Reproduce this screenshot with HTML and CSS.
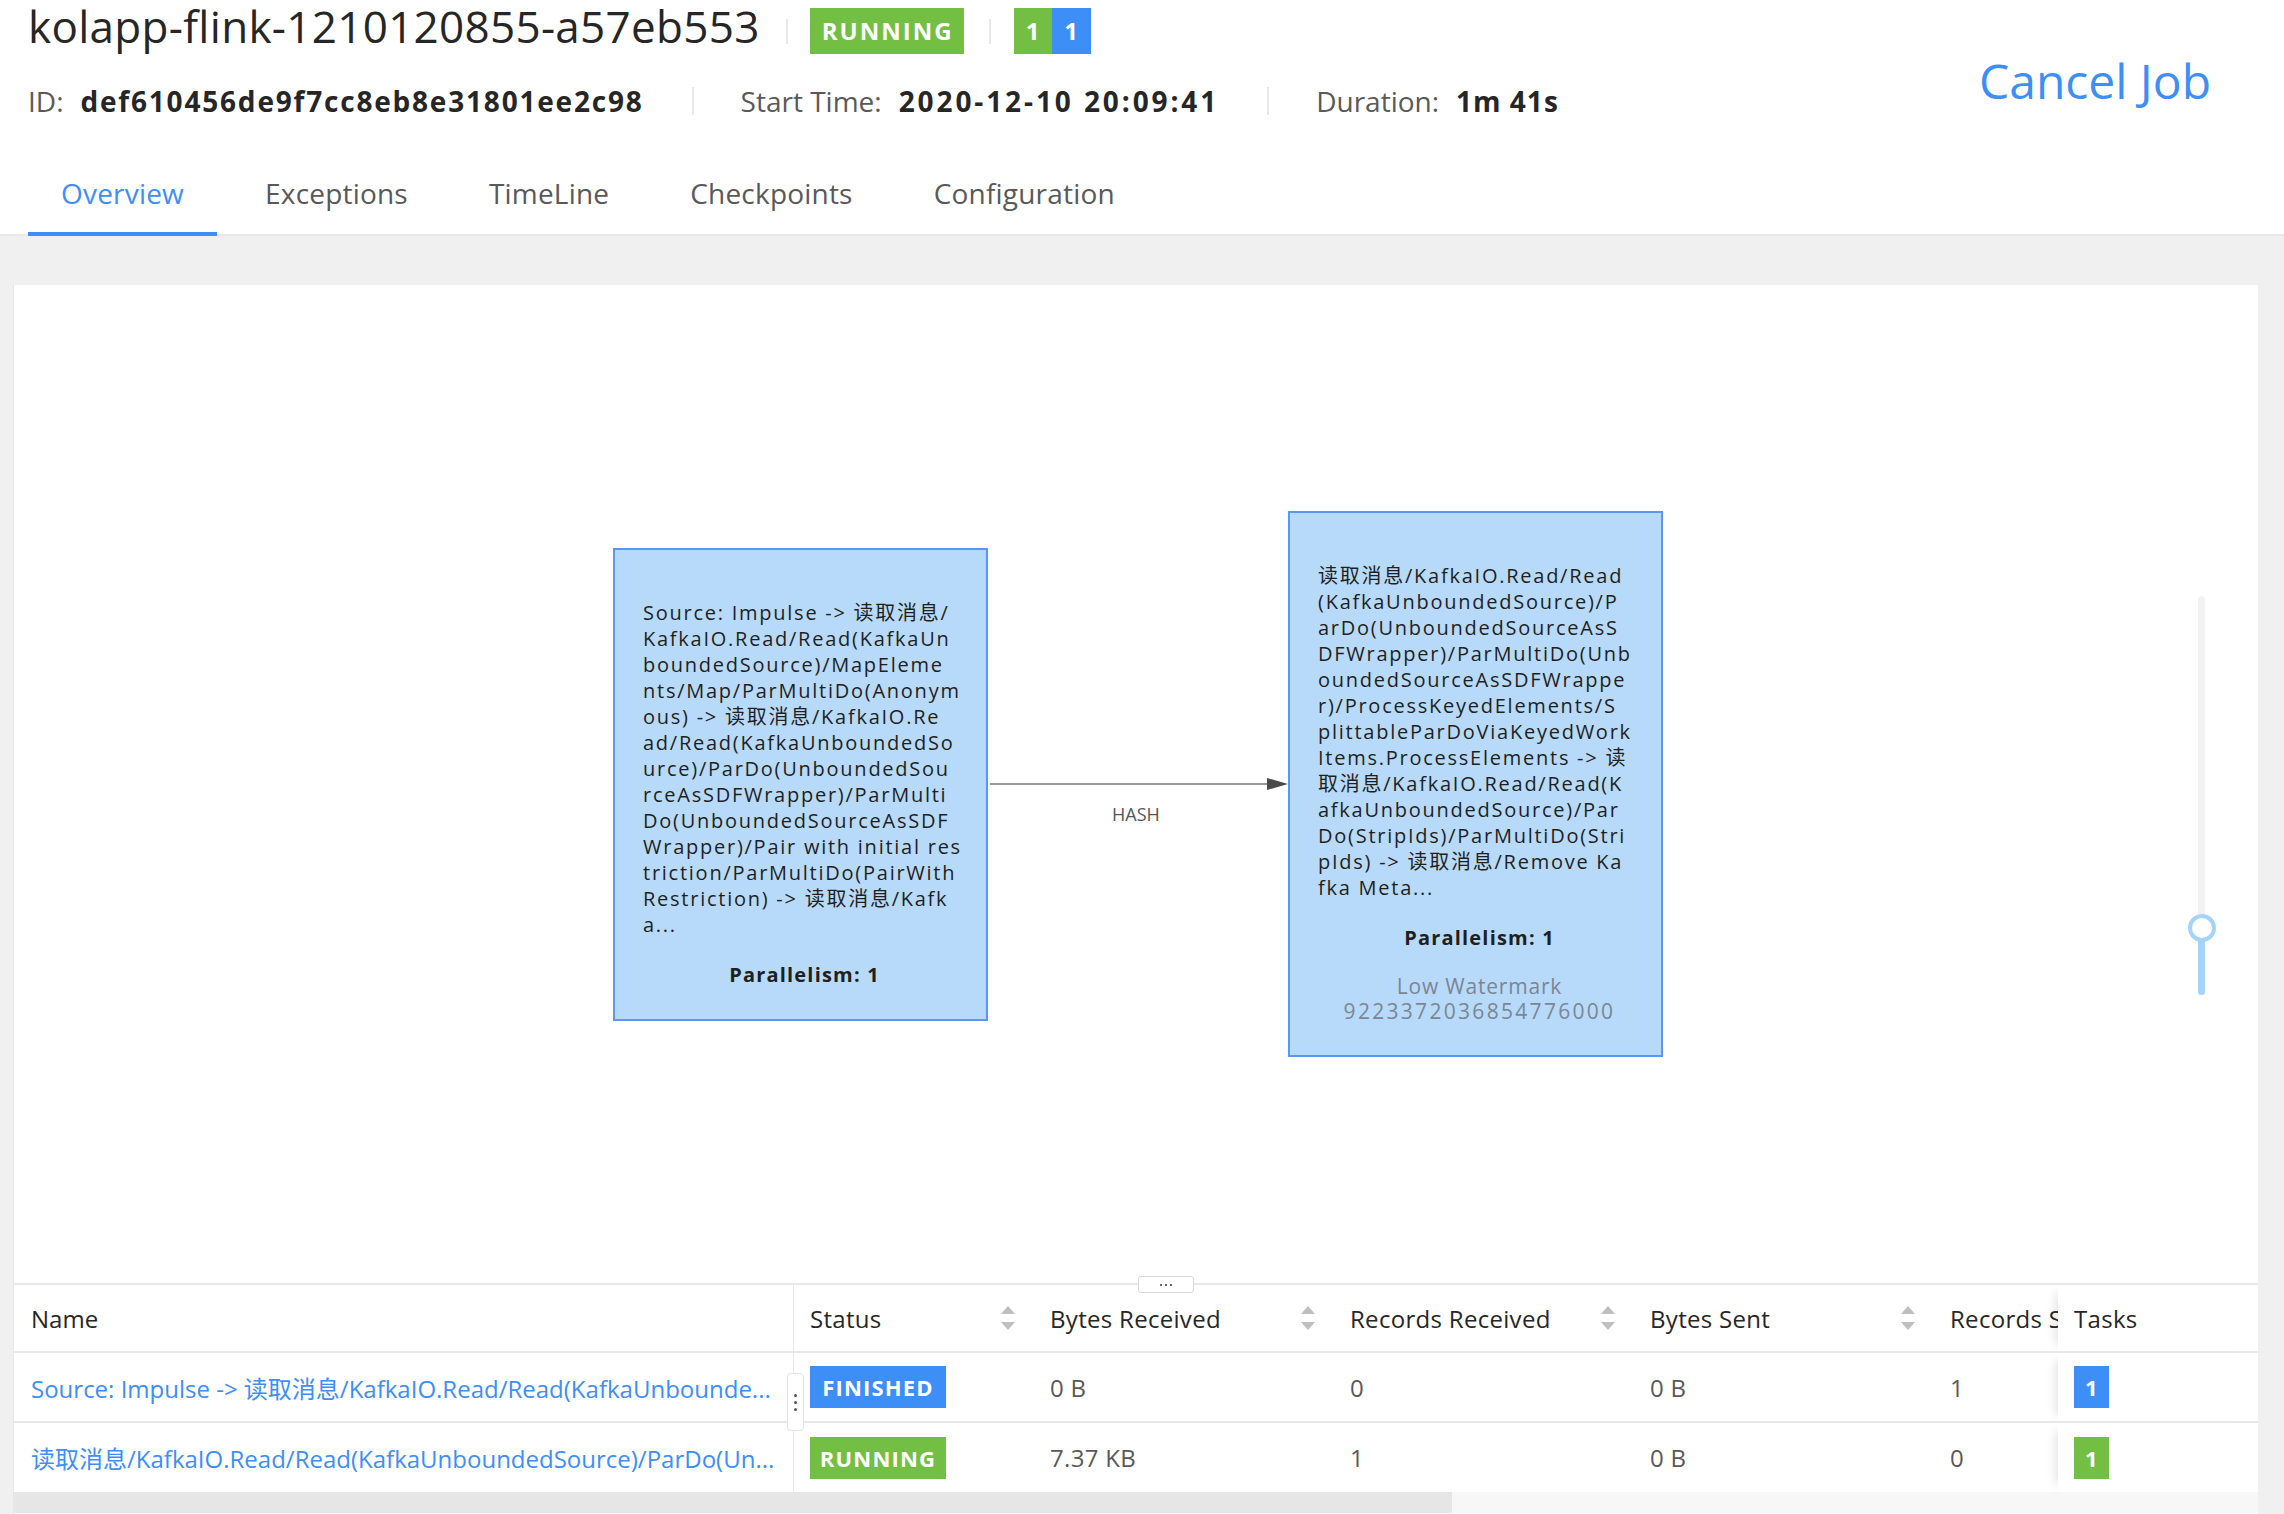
FILE: index.html
```html
<!DOCTYPE html>
<html lang="en">
<head>
<meta charset="utf-8">
<title>kolapp-flink-1210120855-a57eb553</title>
<link rel="stylesheet" href="styles.css">
</head>
<body>
<header class="job-header">
  <div class="head-main">
    <div class="head-info">
      <div class="title-row">
        <h1 class="job-name">kolapp-flink-1210120855-a57eb553</h1>
        <span class="vsep"></span>
        <span class="status-badge running">RUNNING</span>
        <span class="vsep second"></span>
        <span class="task-count"><span class="tc green">1</span><span class="tc blue">1</span></span>
      </div>
      <div class="meta-row">
        <span class="meta-label">ID:</span><span class="meta-value">def610456de9f7cc8eb8e31801ee2c98</span>
        <span class="meta-sep"></span>
        <span class="meta-label">Start Time:</span><span class="meta-value date">2020-12-10 20:09:41</span>
        <span class="meta-sep"></span>
        <span class="meta-label">Duration:</span><span class="meta-value dur">1m 41s</span>
      </div>
    </div>
    <a class="cancel-job">Cancel Job</a>
  </div>
  <nav class="tabs">
    <a class="tab active">Overview</a>
    <a class="tab">Exceptions</a>
    <a class="tab">TimeLine</a>
    <a class="tab">Checkpoints</a>
    <a class="tab">Configuration</a>
  </nav>
</header>

<main class="content">
  <section class="card">
    <div class="graph">
      <svg class="edges" width="2244" height="998" viewBox="0 0 2244 998">
        <line x1="976" y1="499" x2="1256" y2="499" stroke="#9a9a9a" stroke-width="2"/>
        <polygon points="1253,493 1274,499 1253,505" fill="#4a4a4a"/>
        <text x="1122" y="536" text-anchor="middle" class="edge-label">HASH</text>
      </svg>

      <div class="node node-a">
        <div class="node-text">Source: Impulse -&gt; 读取消息/<br>KafkaIO.Read/Read(KafkaUn<br>boundedSource)/MapEleme<br>nts/Map/ParMultiDo(Anonym<br>ous) -&gt; 读取消息/KafkaIO.Re<br>ad/Read(KafkaUnboundedSo<br>urce)/ParDo(UnboundedSou<br>rceAsSDFWrapper)/ParMulti<br>Do(UnboundedSourceAsSDF<br>Wrapper)/Pair with initial res<br>triction/ParMultiDo(PairWith<br>Restriction) -&gt; 读取消息/Kafk<br>a...</div>
        <div class="node-par">Parallelism: 1</div>
      </div>

      <div class="node node-b">
        <div class="node-text">读取消息/KafkaIO.Read/Read<br>(KafkaUnboundedSource)/P<br>arDo(UnboundedSourceAsS<br>DFWrapper)/ParMultiDo(Unb<br>oundedSourceAsSDFWrappe<br>r)/ProcessKeyedElements/S<br>plittableParDoViaKeyedWork<br>Items.ProcessElements -&gt; 读<br>取消息/KafkaIO.Read/Read(K<br>afkaUnboundedSource)/Par<br>Do(StripIds)/ParMultiDo(Stri<br>pIds) -&gt; 读取消息/Remove Ka<br>fka Meta...</div>
        <div class="node-par">Parallelism: 1</div>
        <div class="node-wm">Low Watermark<br><span class="wm-num">9223372036854776000</span></div>
      </div>

      <div class="zoom-slider">
        <div class="zs-track"></div>
        <div class="zs-fill"></div>
        <div class="zs-handle"></div>
      </div>
    </div>

    <div class="table-wrap">
      <span class="split-handle"><i></i><i></i><i></i></span>
      <span class="col-handle"><i></i><i></i><i></i></span>
      <div class="table-scroll">
        <table class="vtable">
          <colgroup>
            <col class="c-name"><col class="c-status"><col class="c-num"><col class="c-num"><col class="c-num"><col class="c-clip"><col class="c-tasks">
          </colgroup>
          <thead>
            <tr>
              <th class="name-cell">Name</th>
              <th><div class="th-in"><span>Status</span><svg class="sorter" width="14" height="24" viewBox="0 0 14 24"><polygon points="0,8 7,0 14,8"/><polygon points="0,16 14,16 7,24"/></svg></div></th>
              <th><div class="th-in"><span>Bytes Received</span><svg class="sorter" width="14" height="24" viewBox="0 0 14 24"><polygon points="0,8 7,0 14,8"/><polygon points="0,16 14,16 7,24"/></svg></div></th>
              <th><div class="th-in"><span>Records Received</span><svg class="sorter" width="14" height="24" viewBox="0 0 14 24"><polygon points="0,8 7,0 14,8"/><polygon points="0,16 14,16 7,24"/></svg></div></th>
              <th><div class="th-in"><span>Bytes Sent</span><svg class="sorter" width="14" height="24" viewBox="0 0 14 24"><polygon points="0,8 7,0 14,8"/><polygon points="0,16 14,16 7,24"/></svg></div></th>
              <th class="clip-cell">Records Sent</th>
              <th class="tasks-cell">Tasks</th>
            </tr>
          </thead>
          <tbody>
            <tr>
              <td class="name-cell"><a class="vlink">Source: Impulse -&gt; 读取消息/KafkaIO.Read/Read(KafkaUnbounde...</a></td>
              <td><span class="tag blue">FINISHED</span></td>
              <td>0 B</td>
              <td>0</td>
              <td>0 B</td>
              <td class="clip-cell">1</td>
              <td class="tasks-cell"><span class="tag-num blue">1</span></td>
            </tr>
            <tr>
              <td class="name-cell"><a class="vlink">读取消息/KafkaIO.Read/Read(KafkaUnboundedSource)/ParDo(Un...</a></td>
              <td><span class="tag green">RUNNING</span></td>
              <td>7.37 KB</td>
              <td>1</td>
              <td>0 B</td>
              <td class="clip-cell">0</td>
              <td class="tasks-cell"><span class="tag-num green">1</span></td>
            </tr>
          </tbody>
        </table>
      </div>
      <div class="hscroll"><div class="hthumb"></div></div>
    </div>
  </section>
</main>
</body>
</html>
```

FILE: styles.css
```css
* { box-sizing: border-box; }
html, body { margin: 0; padding: 0; }
body {
  width: 2284px;
  height: 1514px;
  overflow: hidden;
  background: #f0f0f0;
  font-family: "Open Sans", "Noto Sans CJK SC", sans-serif;
  color: #262626;
}

/* ---------- header ---------- */
.job-header {
  height: 236px;
  background: #fff;
  border-bottom: 2px solid #e8e8e8;
  padding: 8px 0 0 28px;
  display: flex;
  flex-direction: column;
}
.head-main {
  display: flex;
  justify-content: space-between;
  align-items: flex-start;
}
.title-row {
  display: flex;
  align-items: center;
  height: 46px;
}
.job-name {
  margin: 0 0 10px;
  font-size: 44px;
  font-weight: 400;
  line-height: 46px;
  letter-spacing: 0.3px;
  color: #262626;
  white-space: nowrap;
}
.vsep {
  width: 2px;
  height: 25px;
  background: #e8e8e8;
  margin: 0 22px 0 26px;
}
.vsep.second { margin: 0 23px 0 25px; }
.status-badge {
  height: 46px;
  line-height: 46px;
  width: 154px;
  padding-left: 2px;
  text-align: center;
  font-size: 24px;
  font-weight: 700;
  letter-spacing: 2px;
  color: #fff;
}
.status-badge.running { background: #72bf44; }
.task-count { display: flex; height: 46px; }
.tc {
  width: 38px;
  line-height: 46px;
  text-align: center;
  font-size: 24px;
  font-weight: 700;
  color: #fff;
}
.tc.green { background: #72bf44; }
.tc.blue { background: #3d8ef6; width: 39px; }

.meta-row {
  display: flex;
  align-items: center;
  height: 40px;
  margin-top: 27px;
  font-size: 28px;
  line-height: 40px;
  white-space: nowrap;
}
.meta-label { color: #595959; margin-right: 17px; }
.meta-value { font-weight: 700; color: #262626; letter-spacing: 1.8px; }
.meta-value.date { letter-spacing: 2.9px; }
.meta-value.dur { letter-spacing: 1px; }
.meta-sep {
  width: 2px;
  height: 28px;
  background: #e8e8e8;
  margin: 0 47px 0 48px;
}
.cancel-job {
  margin: 45px 73px 0 0;
  font-size: 48px;
  line-height: 56px;
  color: #3d8ef6;
  cursor: pointer;
  white-space: nowrap;
}

.tabs {
  margin-top: auto;
  display: flex;
  height: 113px;
}
.tab {
  position: relative;
  padding: 52px 33px 21px;
  margin-right: 15px;
  font-size: 28px;
  line-height: 40px;
  letter-spacing: 0.2px;
  color: #595959;
  white-space: nowrap;
  cursor: pointer;
}
.tab.active { color: #3d8ef6; }
.tab.active::after {
  content: "";
  position: absolute;
  left: 0;
  right: 0;
  bottom: -2px;
  height: 4px;
  background: #3d8ef6;
}

/* ---------- content ---------- */
.content {
  height: 1278px;
  padding: 49px 26px 0 14px;
}
.card {
  height: 100%;
  background: #fff;
  display: flex;
  flex-direction: column;
  box-shadow: -1px 0 0 #e6e6e6;
}
.graph {
  position: relative;
  height: 998px;
  flex: none;
}
.edges { position: absolute; left: 0; top: 0; }
.edge-label {
  font-family: "Open Sans", sans-serif;
  font-size: 18px;
  fill: #555;
}
.node {
  position: absolute;
  width: 375px;
  background: #b7dafa;
  border: 2px solid #5599f4;
  padding: 50px 20px 31px 28px;
  font-size: 20px;
  line-height: 26px;
  color: #1f1f1f;
  letter-spacing: 1.75px;
}
.node-a { left: 599px; top: 263px; }
.node-b { left: 1274px; top: 226px; }
.node-text { white-space: nowrap; }
.node-par {
  margin-top: 24px;
  text-align: center;
  font-weight: 700;
  letter-spacing: 1.2px;
}
.node-wm {
  margin-top: 23px;
  text-align: center;
  line-height: 25px;
  font-size: 21px;
  color: #7b8694;
  letter-spacing: 0.8px;
  white-space: nowrap;
}
.wm-num { letter-spacing: 2.3px; }

.zoom-slider {
  position: absolute;
  left: 2174px;
  top: 311px;
  width: 28px;
  height: 399px;
}
.zs-track {
  position: absolute;
  left: 10px;
  top: 0;
  width: 7px;
  height: 399px;
  border-radius: 4px;
  background: #f2f2f2;
}
.zs-fill {
  position: absolute;
  left: 10px;
  top: 332px;
  width: 7px;
  height: 67px;
  border-radius: 4px;
  background: #a4d4fb;
}
.zs-handle {
  position: absolute;
  left: 0;
  top: 318px;
  width: 28px;
  height: 28px;
  border-radius: 50%;
  border: 4px solid #a4d4fb;
  background: #fff;
}

/* ---------- table ---------- */
.table-wrap {
  position: relative;
  border-top: 2px solid #e8e8e8;
  flex: 1;
  display: flex;
  flex-direction: column;
}
.split-handle {
  position: absolute;
  left: 1124px;
  top: -9px;
  width: 56px;
  height: 17px;
  background: #fff;
  border: 1px solid #d9d9d9;
  border-radius: 3px;
  display: flex;
  align-items: center;
  justify-content: center;
  gap: 3px;
  z-index: 3;
}
.split-handle i {
  display: block;
  width: 2px;
  height: 2px;
  background: #666;
}
.col-handle {
  position: absolute;
  left: 773px;
  top: 88px;
  width: 17px;
  height: 58px;
  background: #fff;
  border: 1px solid #e3e3e3;
  border-radius: 4px;
  display: flex;
  flex-direction: column;
  align-items: center;
  justify-content: center;
  gap: 4px;
  z-index: 3;
}
.col-handle i {
  display: block;
  width: 3px;
  height: 3px;
  border-radius: 50%;
  background: #555;
}
.table-scroll { overflow: hidden; }
.vtable {
  table-layout: fixed;
  border-collapse: separate;
  border-spacing: 0;
  width: 2244px;
  font-size: 24px;
  letter-spacing: 0.3px;
  color: #595959;
}
.c-name { width: 780px; }
.c-status { width: 240px; }
.c-num { width: 300px; }
.c-clip { width: 124px; }
.c-tasks { width: 200px; }
.vtable th,
.vtable td {
  height: 70px;
  padding: 0 19px 0 16px;
  border-bottom: 2px solid #e8e8e8;
  text-align: left;
  vertical-align: middle;
  white-space: nowrap;
  overflow: hidden;
}
.vtable th {
  font-weight: 400;
  color: #262626;
  height: 68px;
}
.vtable tbody tr:last-child td { height: 69px; border-bottom: 0; }
.vtable .name-cell {
  padding-left: 17px;
  padding-right: 10px;
  border-right: 1px solid #e8e8e8;
  text-overflow: ellipsis;
  letter-spacing: 0;
}
.vtable .clip-cell { padding-right: 0; }
.th-in {
  display: flex;
  align-items: center;
  justify-content: space-between;
}
.sorter { fill: #bfbfbf; flex: none; }
.vlink { color: #3d8ef6; cursor: pointer; }
.tasks-cell {
  background: #fff;
  box-shadow: -10px 0 10px -8px rgba(0, 0, 0, 0.12);
}
.tag {
  display: inline-block;
  width: 136px;
  height: 42px;
  line-height: 42px;
  text-align: center;
  font-size: 22px;
  font-weight: 700;
  letter-spacing: 1.2px;
  color: #fff;
}
.tag-num {
  display: inline-block;
  width: 35px;
  height: 42px;
  line-height: 42px;
  text-align: center;
  font-size: 22px;
  font-weight: 700;
  color: #fff;
}
.blue { background: #3d8ef6; }
.green { background: #72bf44; }

.hscroll {
  height: 21px;
  background: #f7f7f7;
  flex: none;
}
.hthumb {
  width: 1438px;
  height: 100%;
  background: #e6e6e6;
}
```
